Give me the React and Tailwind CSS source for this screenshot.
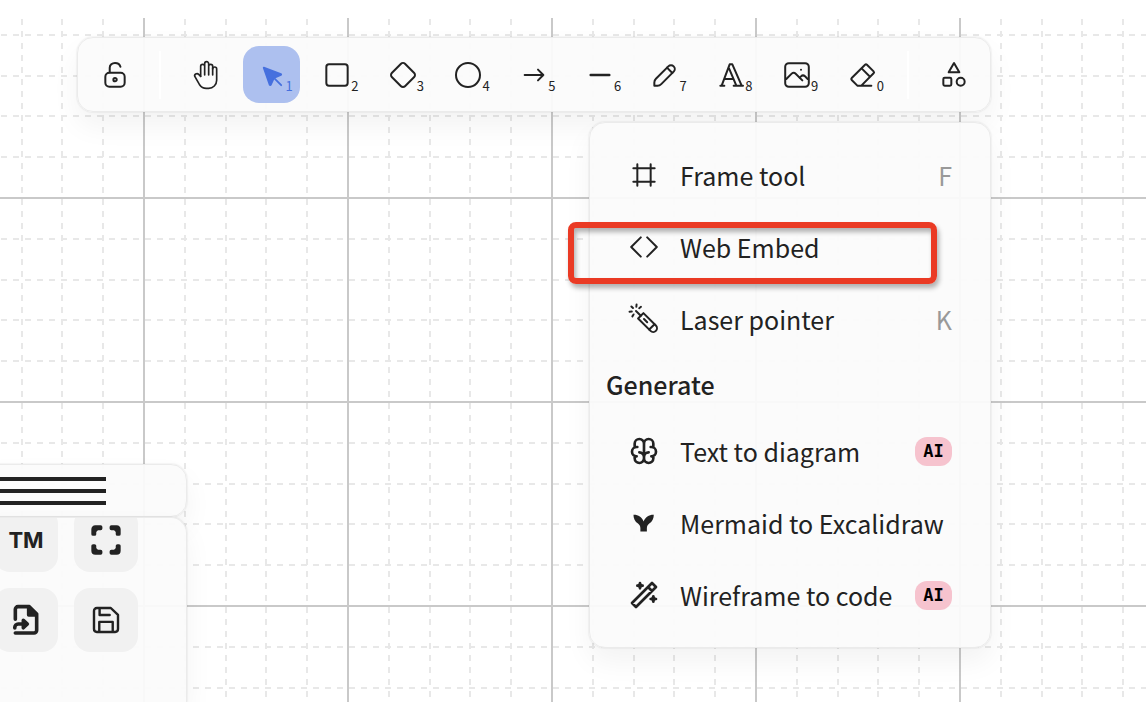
const FONT = "font-['Noto_Sans_CJK_SC',sans-serif]";

function Icon({ box = "0 0 24 24", w = 1.5, children }) {
  return (
    <svg
      viewBox={box}
      className="size-8 shrink-0"
      fill="none"
      stroke="currentColor"
      strokeWidth={w}
      strokeLinecap="round"
      strokeLinejoin="round"
      aria-hidden="true"
    >
      {children}
    </svg>
  );
}

const B20 = "0 0 20 20";

const tools = [
  {
    name: "Hand",
    icon: (
      <Icon w={1.25}>
        <path d="M8 13v-7.5a1.5 1.5 0 0 1 3 0v6.5M11 5.5v-2a1.5 1.5 0 1 1 3 0v8.5M14 5.5a1.5 1.5 0 0 1 3 0v6.5" />
        <path d="M17 7.5a1.5 1.5 0 0 1 3 0v8.5a6 6 0 0 1 -6 6h-2h.208a6 6 0 0 1 -5.012 -2.7a69.74 69.74 0 0 1 -.196 -.3c-.312 -.479 -1.407 -2.388 -3.286 -5.728a1.5 1.5 0 0 1 .536 -2.022a1.867 1.867 0 0 1 2.28 .28l1.47 1.47" />
      </Icon>
    ),
  },
  {
    name: "Selection",
    key: "1",
    active: true,
    icon: (
      <Icon box="0 0 22 22" w={1.25}>
        <path
          fill="currentColor"
          d="M6 6l4.153 11.793a0.365 .365 0 0 0 .331 .207a0.366 .366 0 0 0 .332 -.207l2.184 -4.793l4.787 -1.994a0.355 .355 0 0 0 .213 -.323a0.355 .355 0 0 0 -.213 -.323l-11.787 -4.36z"
        />
        <path d="M13.5 13.5l4.5 4.5" />
      </Icon>
    ),
  },
  { name: "Rectangle", key: "2", icon: <Icon><rect x="4" y="4" width="16" height="16" rx="2" /></Icon> },
  {
    name: "Diamond",
    key: "3",
    icon: (
      <Icon>
        <path d="M10.5 20.4l-6.9 -6.9c-.781 -.781 -.781 -2.219 0 -3l6.9 -6.9c.781 -.781 2.219 -.781 3 0l6.9 6.9c.781 .781 .781 2.219 0 3l-6.9 6.9c-.781 .781 -2.219 .781 -3 0z" />
      </Icon>
    ),
  },
  { name: "Ellipse", key: "4", icon: <Icon><circle cx="12" cy="12" r="9" /></Icon> },
  { name: "Arrow", key: "5", icon: <Icon><path d="M5 12h14M15 16l4-4M15 8l4 4" /></Icon> },
  { name: "Line", key: "6", icon: <Icon box={B20}><path d="M4.167 10h11.666" /></Icon> },
  {
    name: "Draw",
    key: "7",
    icon: (
      <Icon box={B20} w={1.25}>
        <path d="m7.643 15.69 7.774-7.773a2.357 2.357 0 1 0-3.334-3.334L4.31 12.357a3.333 3.333 0 0 0-.977 2.357v1.953h1.953c.884 0 1.732-.352 2.357-.977Z" />
        <path d="m11.25 5.417 3.333 3.333" />
      </Icon>
    ),
  },
  {
    name: "Text",
    key: "8",
    icon: <Icon><path d="M4 20h3M14 20h7M6.9 15h6.9M10.2 6.3 16 20M5 20 11 4h2l7 16" /></Icon>,
  },
  {
    name: "Insert image",
    key: "9",
    icon: (
      <Icon box={B20} w={1.25}>
        <path d="M12.5 6.667h.01" />
        <path d="M4.91 2.625h10.18a2.284 2.284 0 0 1 2.285 2.284v10.182a2.284 2.284 0 0 1-2.284 2.284H4.909a2.284 2.284 0 0 1-2.284-2.284V4.909a2.284 2.284 0 0 1 2.284-2.284Z" />
        <path d="m3.333 12.5 3.334-3.333c.773-.745 1.726-.745 2.5 0l4.166 4.166" />
        <path d="m11.667 11.667.833-.834c.774-.744 1.726-.744 2.5 0l1.667 1.667" />
      </Icon>
    ),
  },
  {
    name: "Eraser",
    key: "0",
    icon: (
      <Icon>
        <path d="M19 20h-10.5l-4.21 -4.3a1 1 0 0 1 0 -1.41l10 -10a1 1 0 0 1 1.41 0l5 5a1 1 0 0 1 0 1.41l-9.2 9.3M18 13.3l-6.3 -6.3" />
      </Icon>
    ),
  },
];

const insertItems = [
  { label: "Frame tool", shortcut: "F", icon: <Icon w={1.5}><path d="M4 7h16M4 17h16M7 4v16M17 4v16" /></Icon> },
  { label: "Web Embed", icon: <Icon box={B20} w={1.25}><path d="M12 16l6-6-6-6M8 4l-6 6 6 6" /></Icon> },
  {
    label: "Laser pointer",
    shortcut: "K",
    icon: (
      <Icon box={B20} w={1.25}>
        <g transform="rotate(90 10 10)">
          <path d="m9.644 13.69 7.774-7.773a2.357 2.357 0 0 0-3.334-3.334l-7.773 7.774L8 12l1.643 1.69Z" />
          <path d="m13.25 3.417 3.333 3.333M10 10l2-2M5 15l3-3M2.156 17.894l1-1M5.453 19.029l-.144-1.407M2.377 11.887l.866 1.118M8.354 17.273l-1.194-.758M.953 14.652l1.408.13" />
        </g>
      </Icon>
    ),
  },
];

const generateItems = [
  {
    label: "Text to diagram",
    ai: true,
    icon: (
      <Icon w={2}>
        <path d="M15.5 13a3.5 3.5 0 0 0 -3.5 3.5v1a3.5 3.5 0 0 0 7 0v-1.8M8.5 13a3.5 3.5 0 0 1 3.5 3.5v1a3.5 3.5 0 0 1 -7 0v-1.8M17.5 16a3.5 3.5 0 0 0 0 -7h-.5M19 9.3v-2.8a3.5 3.5 0 0 0 -7 0M6.5 16a3.5 3.5 0 0 1 0 -7h.5M5 9.3v-2.8a3.5 3.5 0 0 1 7 0v10" />
      </Icon>
    ),
  },
  {
    label: "Mermaid to Excalidraw",
    icon: (
      <Icon box="-5 -11 512 512" w={0}>
        <path
          fill="currentColor"
          d="M407.48,111.18C335.587,108.103 269.573,152.338 245.08,220C220.587,152.338 154.573,108.103 82.68,111.18C80.285,168.229 107.577,222.632 154.74,254.82C178.908,271.419 193.35,298.951 193.27,328.27L193.27,379.13L296.9,379.13L296.9,328.27C296.816,298.953 311.255,271.42 335.42,254.82C382.596,222.644 409.892,168.233 407.48,111.18Z"
        />
      </Icon>
    ),
  },
  {
    label: "Wireframe to code",
    ai: true,
    icon: (
      <Icon w={2}>
        <path d="M6 21l15 -15l-3 -3l-15 15l3 3M15 6l3 3M9 3a2 2 0 0 0 2 2a2 2 0 0 0 -2 2a2 2 0 0 0 -2 -2a2 2 0 0 0 2 -2M19 13a2 2 0 0 0 2 2a2 2 0 0 0 -2 2a2 2 0 0 0 -2 -2a2 2 0 0 0 2 -2" />
      </Icon>
    ),
  },
];

const island =
  "border border-[#ebebeb] bg-[#fbfbfb]/95 shadow-[0_0_2px_rgba(0,0,0,0.14),0_14px_28px_rgba(0,0,0,0.05)]";

function CanvasGrid() {
  return (
    <svg className="absolute inset-x-0 top-[18px] bottom-0 -z-10 h-full w-full" aria-hidden="true">
      <defs>
        <pattern id="grid" x="143" y="179" width="204" height="204" patternUnits="userSpaceOnUse">
          <g stroke="#e8e8e8" strokeWidth="2" strokeDasharray="6 6">
            {[41, 82, 122, 163].map((p) => (
              <path key={p} d={`M${p + 1} 2V204M2 ${p + 1}H204`} />
            ))}
          </g>
          <path d="M1 0V204M0 1H204" stroke="#c9c9c9" strokeWidth="2" />
        </pattern>
      </defs>
      <rect width="100%" height="100%" fill="url(#grid)" />
    </svg>
  );
}

function ToolButton({ tool }) {
  return (
    <button
      type="button"
      aria-label={tool.name}
      className={
        tool.active
          ? "relative flex size-[57px] items-center justify-center rounded-2xl bg-[#adc0ef] text-[#4670de]"
          : "relative flex size-[57px] items-center justify-center rounded-2xl"
      }
    >
      {tool.icon}
      {tool.key && <span className="absolute right-[7px] bottom-[9px] text-[13px] leading-4">{tool.key}</span>}
    </button>
  );
}

function Divider() {
  return <div className="h-12 w-0.5 bg-white" />;
}

function MenuItem({ item }) {
  return (
    <li>
      <button type="button" role="menuitem" className="flex h-[72px] w-full items-center px-[22px] text-left">
        {item.icon}
        <span className="ml-5 flex-1 whitespace-nowrap text-[25px] leading-8">{item.label}</span>
        {item.shortcut && <span className="text-[25px] leading-8 text-[#999999]">{item.shortcut}</span>}
        {item.ai && (
          <span className="flex h-[29px] w-[37px] items-center justify-center rounded-xl bg-[#f6c3ce] font-['DejaVu_Sans_Mono',monospace] text-[17px] leading-6 font-bold text-black">
            AI
          </span>
        )}
      </button>
    </li>
  );
}

function ToolsMenu() {
  return (
    <div role="menu" className={`absolute top-full right-0 mt-[10px] w-[402px] rounded-2xl p-4 ${island}`}>
      <ul>
        {insertItems.map((item) => (
          <MenuItem key={item.label} item={item} />
        ))}
      </ul>
      <h2 className="flex h-[60px] items-center pb-0.5 text-[25px] leading-8 font-medium">Generate</h2>
      <ul>
        {generateItems.map((item) => (
          <MenuItem key={item.label} item={item} />
        ))}
      </ul>
      <div className="pointer-events-none absolute top-[99px] -left-[22px] h-[62px] w-[369px] rounded-lg border-[6px] border-[#ea3a24] shadow-[2px_4px_5px_rgba(0,0,0,0.3),inset_2px_4px_5px_rgba(0,0,0,0.3)]" />
    </div>
  );
}

function PanelButton({ label, children }) {
  return (
    <button type="button" aria-label={label} className="flex size-16 items-center justify-center rounded-2xl bg-[#f1f1f1]">
      {children}
    </button>
  );
}

function SidePanel() {
  return (
    <aside className="mt-auto flex h-[238px] w-[187px] flex-col">
      <div className={`-ml-5 flex h-[53px] items-center rounded-2xl ${island}`}>
        <button type="button" aria-label="Menu" className="flex h-7 w-[125px] flex-col justify-between">
          <span className="h-1 w-full bg-[#222222]" />
          <span className="h-1 w-full bg-[#222222]" />
          <span className="h-1 w-full bg-[#222222]" />
        </button>
      </div>
      <div className={`-ml-5 flex-1 overflow-hidden rounded-t-2xl border-b-0 ${island}`}>
        <div className="-mt-[10px] ml-[13px] grid w-fit grid-cols-2 gap-4">
          <PanelButton label="Trademark">
            <span className="font-['Inter',sans-serif] text-[22px] leading-6 font-bold">TM</span>
          </PanelButton>
          <PanelButton label="Fullscreen">
            <Icon w={2.6}>
              <path
                fill="currentColor"
                d="M2.3 7.6V4Q2.3 2.3 4 2.3H8V3.4H5.4L3.4 5.4V7.6ZM21.7 7.6V4Q21.7 2.3 20 2.3H16V3.4H18.6L20.6 5.4V7.6ZM2.3 16.4V20Q2.3 21.7 4 21.7H8V20.6H5.4L3.4 18.6V16.4ZM21.7 16.4V20Q21.7 21.7 20 21.7H16V20.6H18.6L20.6 18.6V16.4Z"
              />
            </Icon>
          </PanelButton>
          <PanelButton label="Export file">
            <Icon w={2.7}>
              <path d="M4 11.4V4a2 2 0 0 1 2-2h8.5l5.5 5.5v12.2a2 2 0 0 1-2 2H4" />
              <path d="M3.6 18v-.5a2.5 2.5 0 0 1 2.5-2.5h6" />
              <path d="M10 12.2l3 2.8-3 2.8z" fill="currentColor" />
              <path d="M14 2.5v5.7h5.5z" fill="currentColor" />
            </Icon>
          </PanelButton>
          <PanelButton label="Save">
            <Icon box={B20} w={1.5}>
              <path d="M4.3 2.5h8.7l4.5 4.3v8.9a1.8 1.8 0 0 1-1.8 1.8H4.3a1.8 1.8 0 0 1-1.8-1.8V4.3a1.8 1.8 0 0 1 1.8-1.8M6 2.8v4.1h6.3M5.8 17.2v-6h8.4v6" />
            </Icon>
          </PanelButton>
        </div>
      </div>
    </aside>
  );
}

export default function App() {
  return (
    <main className={`relative isolate flex min-h-screen flex-col overflow-hidden bg-white text-[#222222] ${FONT}`}>
      <CanvasGrid />
      <header className="relative z-10 mt-[37px] ml-[77px] w-fit">
        <nav aria-label="Tools" className={`flex items-center gap-4 rounded-2xl p-2 ${island}`}>
          <ToolButton
            tool={{
              name: "Keep selected tool active",
              icon: (
                <Icon box={B20} w={1.25}>
                  <path d="M13.542 8.542H6.458a2.5 2.5 0 0 0-2.5 2.5v3.75a2.5 2.5 0 0 0 2.5 2.5h7.084a2.5 2.5 0 0 0 2.5-2.5v-3.75a2.5 2.5 0 0 0-2.5-2.5Z" />
                  <path d="M10 13.958a1.042 1.042 0 1 0 0-2.083 1.042 1.042 0 0 0 0 2.083Z" />
                  <path d="M6.7 8.333V5.417C6.7 3.806 8.2 2.5 10 2.5c1.6 0 3 .9 3.4 2.3" />
                </Icon>
              ),
            }}
          />
          <Divider />
          <div className="flex w-[714px] justify-between">
            {tools.map((tool) => (
              <ToolButton key={tool.name} tool={tool} />
            ))}
          </div>
          <Divider />
          <ToolButton
            tool={{
              name: "More tools",
              icon: (
                <Icon>
                  <path d="M12 3l-4 7h8z" />
                  <circle cx="17" cy="17" r="3" />
                  <rect x="4" y="14" width="6" height="6" rx="1" />
                </Icon>
              ),
            }}
          />
        </nav>
        <ToolsMenu />
      </header>
      <SidePanel />
    </main>
  );
}
